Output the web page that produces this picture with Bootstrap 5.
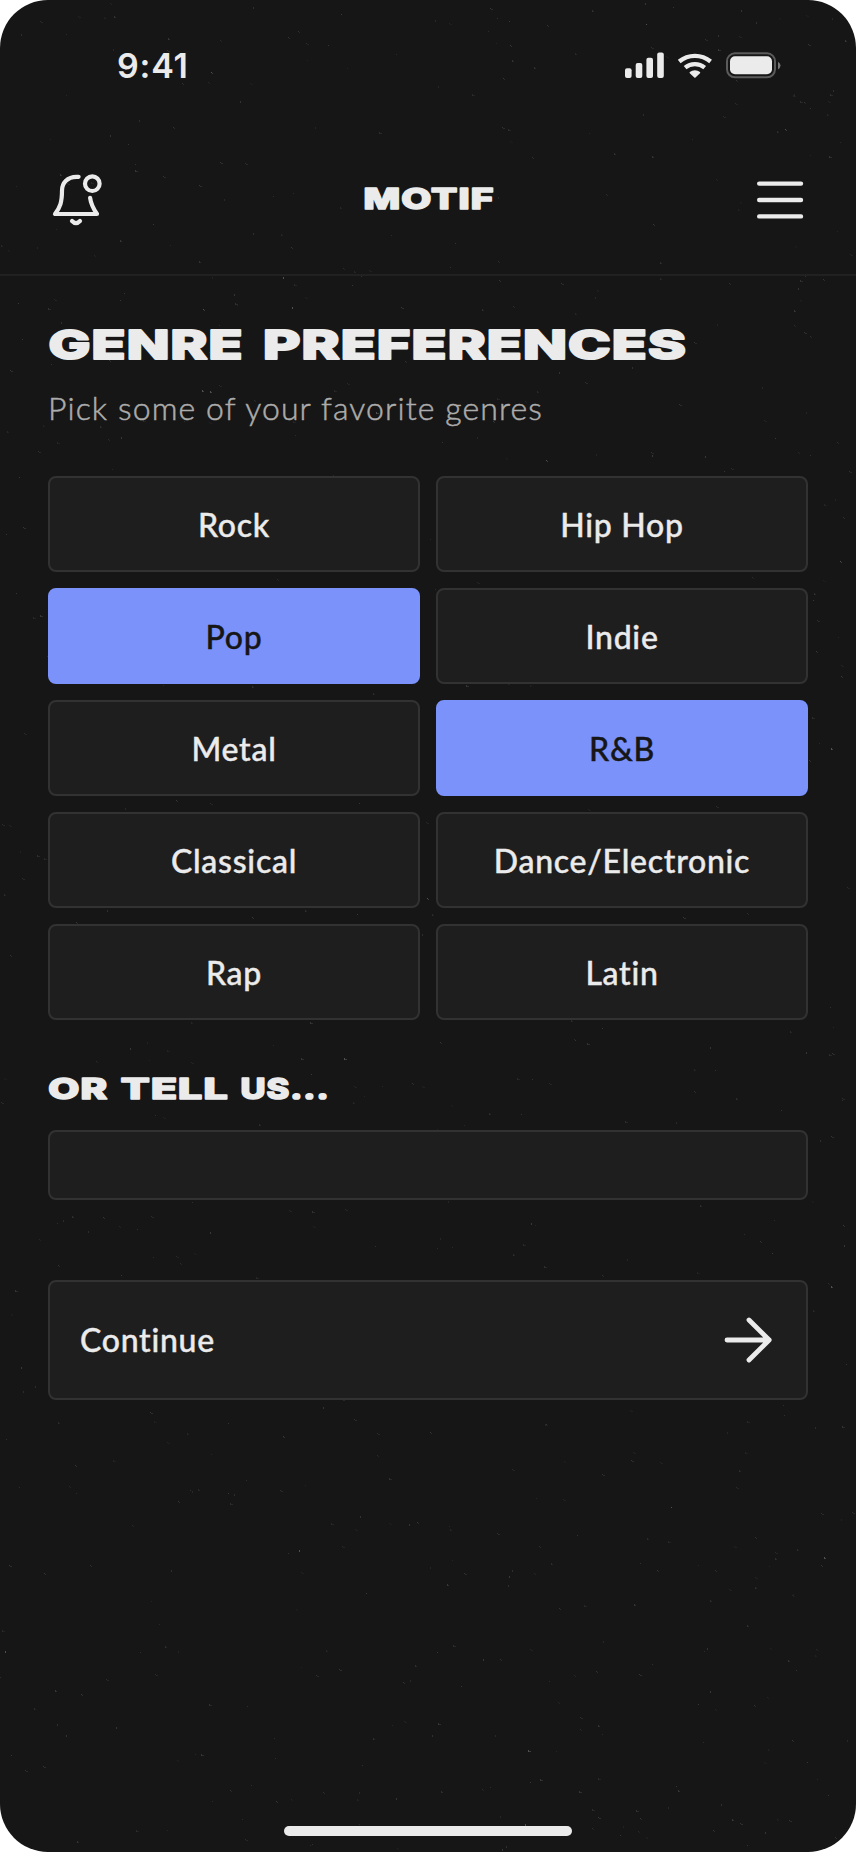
<!DOCTYPE html>
<html lang="en">
<head>
<meta charset="utf-8">
<meta name="viewport" content="width=device-width, initial-scale=1">
<title>Motif – Genre preferences</title>
<link href="https://cdn.jsdelivr.net/npm/bootstrap@5.3.0/dist/css/bootstrap.min.css" rel="stylesheet">
<style>
  :root { --ink: #ebebeb; --base: #161616; --panel: #1e1e1e; --line: #323232; --accent: #7c92fb; }
  body { background: #fff; font-family: Lato, sans-serif; color: var(--ink); }
  .phone { height: 1852px; background: var(--base); border-radius: 48px; }
  .grain { width: 856px; height: 1852px; pointer-events: none; }
  .status-bar { height: 126px; padding: 0 73px 0 117px; }
  .clock { font: 600 34px/40px Inter, sans-serif; letter-spacing: .8px; margin-top: 46px; }
  .status-icons { margin-top: 40px; }
  .top-nav { height: 150px; padding: 0 40px; border-bottom: 2px solid #212121; }
  .top-nav .btn { line-height: 0; }
  svg { display: block; flex: none; }
  .display-type { font-family: Inter, sans-serif; font-weight: 800; letter-spacing: .8px; fill: var(--ink); stroke: var(--ink); stroke-linejoin: round; }
  .content { padding: 0 48px; }
  .subtitle { font-size: 32px; line-height: 40px; font-weight: 300; color: #acacac; -webkit-text-stroke: .5px #acacac; letter-spacing: 1.1px; white-space: nowrap; }
  .genres { grid-template-columns: 1fr 1fr; gap: 16px; margin-top: 48px; }
  .tile { --bs-btn-bg: var(--panel); --bs-btn-color: var(--ink); --bs-btn-border-color: var(--line);
    --bs-btn-active-bg: var(--accent); --bs-btn-active-color: var(--base); --bs-btn-active-border-color: var(--accent);
    --bs-btn-hover-bg: #262626; --bs-btn-hover-color: var(--ink); --bs-btn-hover-border-color: var(--line);
    --bs-btn-border-width: 2px; --bs-btn-border-radius: 8px; --bs-btn-font-size: 32px; --bs-btn-line-height: 40px;
    height: 96px; padding: 1px 0 0; font-weight: 500; letter-spacing: .74px; -webkit-text-stroke: .4px currentColor; white-space: nowrap; }
  .other { height: 70px; background: var(--panel) !important; border: 2px solid var(--line); border-radius: 8px; color: var(--ink); }
  .next { height: 120px; margin-top: 80px; padding: 0 28px 0 30px; }
  .home-bar { width: 288px; height: 10px; margin-bottom: 16px; background: var(--ink); }
</style>
</head>
<body>
<div class="phone position-relative overflow-hidden d-flex flex-column">
  <svg class="grain position-absolute top-0 start-0" id="grain" viewBox="0 0 856 1852" fill="#fff" aria-hidden="true"></svg>

  <div class="status-bar position-relative d-flex justify-content-between align-items-start">
    <div class="clock">9:41</div>
    <svg class="status-icons" width="162" height="50" viewBox="0 -.3 162 50" fill="#ebebeb" aria-label="Signal, Wi-Fi, battery">
      <rect x="4" y="28" width="6.6" height="9.8" rx="2"/><rect x="14.7" y="22.8" width="6.6" height="15" rx="2"/>
      <rect x="25.4" y="17.4" width="6.6" height="20.4" rx="2"/><rect x="36.2" y="12.3" width="6.6" height="25.5" rx="2"/>
      <g fill="none" stroke="#ebebeb" stroke-width="4.3" stroke-linejoin="round">
        <path d="M58.2 21.2a24.5 24.5 0 0 1 31.4 0"/><path d="M64.1 27.3a15.6 15.6 0 0 1 19.6 0"/></g>
      <path d="M68.8 31.8a7.7 7.7 0 0 1 10.2 0q.5.6 0 1.1l-4.5 4.2q-.6.5-1.2 0l-4.5-4.2q-.5-.5 0-1.1z"/>
      <rect x="106" y="13" width="48" height="24" rx="8" fill="none" stroke="#5b5b5b" stroke-width="2"/>
      <rect x="109" y="16" width="42" height="18" rx="5"/><path d="M157 21.5q2.5 1.4 2.5 3.8t-2.5 3.8z" fill="#777"/>
    </svg>
  </div>

  <nav class="top-nav position-relative d-flex justify-content-between align-items-start">
    <button class="btn p-0 border-0 mt-4" aria-label="Notifications">
      <svg width="80" height="80" viewBox="0 -10 80 80" fill="none" stroke="#ebebeb" stroke-width="4.2" stroke-linecap="round" stroke-linejoin="round">
        <path d="M38.6 16.8H36.4C27.6 16.8 22 23 22 30.6C22 42 20.2 47.2 15 54H57C53.2 48.6 50.8 43.4 50.1 37.8"/>
        <circle cx="52.3" cy="23.7" r="7.3"/><path d="M32 61Q36 65.2 40 61"/>
      </svg>
    </button>
    <svg width="140" height="40" viewBox="0 0 140 40" style="margin-top:54px">
      <text class="display-type" x="5.5" y="28.9" font-size="28.5" stroke-width="1.6" textLength="131" lengthAdjust="spacingAndGlyphs">MOTIF</text>
    </svg>
    <button class="btn p-0 border-0" aria-label="Menu">
      <svg width="80" height="110" viewBox="736 126 80 110" stroke="#ebebeb" stroke-width="4.4" stroke-linecap="round">
        <path d="M759.2 183.6H801M759.2 200H801M759.2 216.4H801"/>
      </svg>
    </button>
  </nav>

  <main class="content position-relative">
    <h1 class="m-0" style="padding-top:40px">
      <svg width="760" height="56" viewBox="48 316 760 56">
        <text class="display-type" y="359" font-size="40" stroke-width="2"><tspan x="48.5" textLength="195" lengthAdjust="spacingAndGlyphs">GENRE</tspan> <tspan x="263" textLength="424" lengthAdjust="spacingAndGlyphs">PREFERENCES</tspan></text>
      </svg>
    </h1>
    <p class="subtitle mb-0" style="padding-top:16px">Pick some of your favorite genres</p>
    <div class="genres d-grid">
      <button class="btn tile">Rock</button><button class="btn tile">Hip Hop</button>
      <button class="btn tile active">Pop</button><button class="btn tile">Indie</button>
      <button class="btn tile">Metal</button><button class="btn tile active">R&amp;B</button>
      <button class="btn tile">Classical</button><button class="btn tile">Dance/Electronic</button>
      <button class="btn tile">Rap</button><button class="btn tile">Latin</button>
    </div>
    <h2 class="m-0" style="padding-top:40px">
      <svg width="400" height="70" viewBox="48 1060 400 70">
        <text class="display-type" y="1099" font-size="28.5" stroke-width="1.6"><tspan x="48.3" textLength="60" lengthAdjust="spacingAndGlyphs">OR</tspan> <tspan x="120.8" textLength="108" lengthAdjust="spacingAndGlyphs">TELL</tspan> <tspan x="240.5" textLength="89" lengthAdjust="spacingAndGlyphs">US...</tspan></text>
      </svg>
    </h2>
    <input class="other form-control" type="text" aria-label="Other genres">
    <button class="btn tile next w-100 d-flex justify-content-between align-items-center">
      <span>Continue</span>
      <svg width="60" height="60" viewBox="718 1310 60 60" fill="none" stroke="#ebebeb" stroke-width="4.8" stroke-linecap="round" stroke-linejoin="round">
        <path d="M727 1340H769.2M749 1320L769.2 1340L749 1360"/>
      </svg>
    </button>
  </main>
  <div class="home-bar rounded-pill position-relative mt-auto mx-auto"></div>
</div>
<script src="https://cdn.jsdelivr.net/npm/bootstrap@5.3.0/dist/js/bootstrap.bundle.min.js"></script>
<script>
  // Scatter faint dust specks over the dark background; fixed seed keeps them stable.
  let seed = 941;
  const rnd = () => (seed = (seed * 16807) % 2147483647) / 2147483647;
  let specks = '';
  for (let i = 0; i < 950; i++) {
    const x = Math.floor(rnd() * 856), y = Math.floor(rnd() * 1852);
    const strong = rnd() > .97, o = (strong ? .25 : .05 + rnd() * .1).toFixed(2);
    specks += `<rect x="${x}" y="${y}" width="1" height="${rnd() > .6 ? 2 : 1}" opacity="${o}"/>`;
    if (rnd() > .4) specks += `<rect x="${x + 1}" y="${y + 1}" width="${rnd() > .5 ? 2 : 1}" height="1" opacity="${(o * .7).toFixed(2)}"/>`;
  }
  document.getElementById('grain').innerHTML = specks;
</script>
</body>
</html>
